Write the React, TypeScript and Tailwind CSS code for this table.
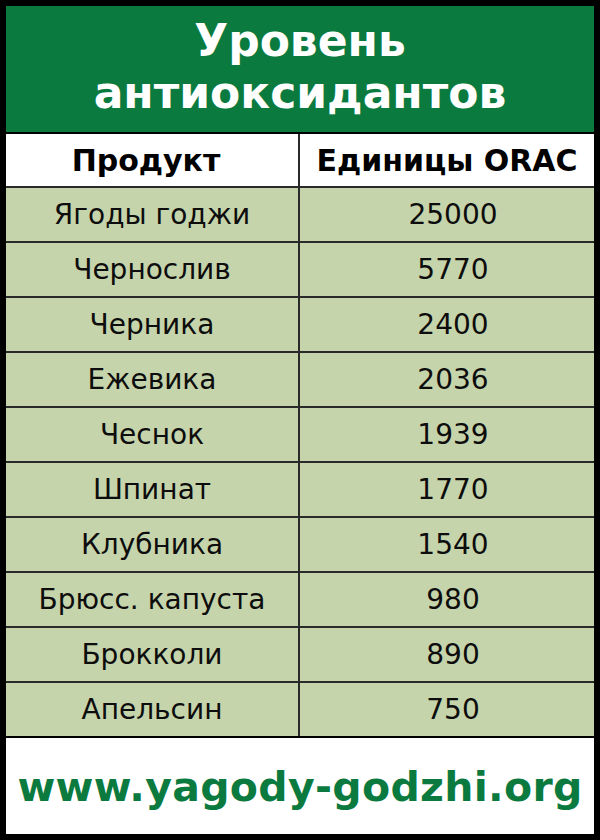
const ROWS: [string, string][] = [
  ["Ягоды годжи", "25000"],
  ["Чернослив", "5770"],
  ["Черника", "2400"],
  ["Ежевика", "2036"],
  ["Чеснок", "1939"],
  ["Шпинат", "1770"],
  ["Клубника", "1540"],
  ["Брюсс. капуста", "980"],
  ["Брокколи", "890"],
  ["Апельсин", "750"],
];

const FONT = "font-['DejaVu_Sans','Verdana',sans-serif]";

export default function App() {
  return (
    <div className={`h-[840px] w-[600px] bg-black p-[6px] ${FONT}`}>
      <div className="flex h-full flex-col">
        <div className="flex h-[126px] flex-col items-center justify-center bg-[#0b7a3f] pb-1 text-[44px] font-bold leading-[52px] text-white">
          <span>Уровень</span>
          <span>антиоксидантов</span>
        </div>
        <div className="mt-[2px] grid h-[52px] grid-cols-[292px_1fr] gap-x-[2px] bg-[#2a2a2a]">
          <div className="flex items-center justify-center bg-white pr-3 text-[30px] font-bold text-black">
            Продукт
          </div>
          <div className="flex items-center justify-center bg-white text-[30px] font-bold text-black">
            Единицы ORAC
          </div>
        </div>
        <div className="grid grid-cols-[292px_1fr] gap-[2px] bg-[#2a2a2a] pt-[2px]">
          {ROWS.map(([name, orac]) => (
            <div key={name} className="contents">
              <div className="flex h-[53px] items-center justify-center bg-[#c6d4ab] text-[28px] text-[#0d0d0d]">
                {name}
              </div>
              <div className="flex h-[53px] items-center justify-center bg-[#c6d4ab] pl-3 text-[28px] text-[#0d0d0d]">
                {orac}
              </div>
            </div>
          ))}
        </div>
        <div className="mt-[2px] flex flex-1 items-center justify-center bg-white pt-1 text-[41px] font-bold tracking-[0.3px] text-[#0b7a3f]">
          www.yagody-godzhi.org
        </div>
      </div>
    </div>
  );
}
